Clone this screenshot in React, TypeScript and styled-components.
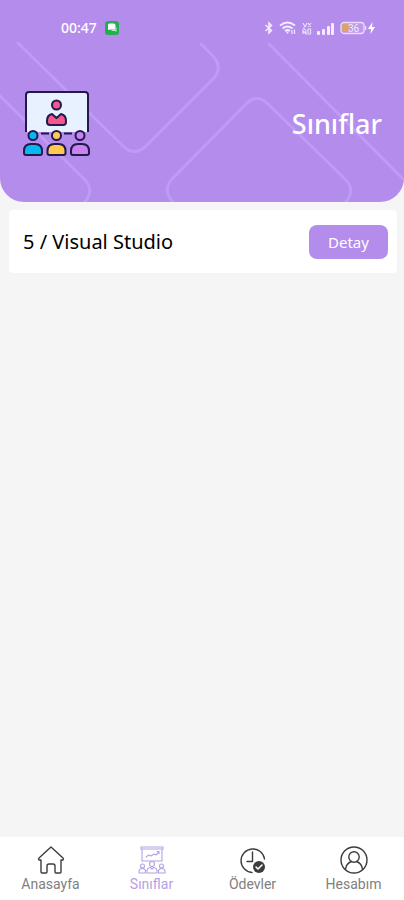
import React from "react";
import styled, { createGlobalStyle } from "styled-components";

const GlobalStyle = createGlobalStyle`
  *, *::before, *::after { box-sizing: border-box; }
  body { margin: 0; background: #f5f5f5; font-family: "Noto Sans", "Open Sans", sans-serif; }
  svg { display: block; flex-shrink: 0; }
`;

const Screen = styled.div`
  display: flex;
  flex-direction: column;
  min-height: 100vh;
  background: #f5f5f5;
`;

const Header = styled.header`
  position: relative;
  overflow: hidden;
  padding-bottom: 44px;
  border-radius: 0 0 24px 24px;
  background: #b38cec;
  color: #fff;
`;

const Pattern = styled.svg`
  position: absolute;
  inset: 0;
  width: 100%;
  height: 100%;
`;

const StatusBar = styled.div`
  position: relative;
  display: flex;
  align-items: center;
  justify-content: space-between;
  height: 56px;
  padding: 0 28px 0 61px;
`;

const StatusGroup = styled.div<{ $gap: number }>`
  display: flex;
  align-items: center;
  gap: ${({ $gap }) => $gap}px;
`;

const Clock = styled.time`
  font-size: 14px;
  line-height: 16px;
  font-weight: 500;
`;

const TitleRow = styled.div`
  position: relative;
  display: flex;
  align-items: center;
  justify-content: space-between;
  padding: 34px 22px 0 23px;
`;

const Title = styled.h1`
  margin: 0;
  font-size: 27px;
  line-height: 36px;
  font-weight: 500;
`;

const ClassList = styled.ul`
  flex: 1;
  display: flex;
  flex-direction: column;
  gap: 8px;
  margin: 0;
  padding: 8px 7px 8px 9px;
  list-style: none;
`;

const ClassCard = styled.li`
  display: flex;
  align-items: center;
  justify-content: space-between;
  height: 63px;
  padding: 0 9px 0 14px;
  border-radius: 4px;
  background: #fff;
`;

const ClassName = styled.span`
  color: #000;
  font-size: 20px;
  line-height: 28px;
`;

const DetailButton = styled.button`
  width: 79px;
  height: 34px;
  padding: 0;
  border: 0;
  border-radius: 8px;
  background: #b38cec;
  color: #fff;
  font-family: inherit;
  font-size: 15px;
  line-height: 20px;
  cursor: pointer;
`;

const TabBar = styled.nav`
  display: flex;
  height: 63px;
  background: #fff;
`;

const Tab = styled.a<{ $active?: boolean }>`
  flex: 1;
  display: flex;
  flex-direction: column;
  align-items: center;
  padding-top: 8px;
  color: ${({ $active }) => ($active ? "#b5a0e6" : "#3c3c3c")};
  text-decoration: none;
`;

const TabLabel = styled.span<{ $active?: boolean }>`
  color: ${({ $active }) => ($active ? "#b5a0e6" : "#808080")};
  font-family: Roboto, sans-serif;
  font-size: 14px;
  line-height: 18px;
`;

const HeaderPattern = () => (
  <Pattern viewBox="0 0 404 202" preserveAspectRatio="xMidYMin slice" fill="none" stroke="#c09bf5" strokeWidth="3" strokeLinecap="round" aria-hidden="true">
    <path d="M18 43L124 147Q134 156 145 147L212 80Q224 68 213 56L201 44" />
    <path d="M-2 94L83 178Q96 190 84 203" />
    <path d="M174 203Q161 190 173 178L246 104Q257 93 268 104L344 178Q357 190 345 203" />
    <path d="M269 44L406 182" />
  </Pattern>
);

const ChatBadge = () => (
  <svg width="14" height="14" viewBox="0 0 14 14" aria-hidden="true">
    <rect width="14" height="14" rx="3" fill="#25ad52" />
    <path d="M4.500 2.500h4a2 2 0 0 1 2 2v4H5.500L3 9V4a1.500 1.500 0 0 1 1.500-1.500Z" fill="#fff" />
    <path d="M6 8.500h5V6q1 1 .5 2.500V11L10 10H8q-1.500 0-2-1.500Z" fill="#b9ecc6" />
  </svg>
);

const BluetoothIcon = () => (
  <svg width="10" height="14" viewBox="0 0 10 14" fill="none" stroke="#f4ebff" strokeWidth="1.500" aria-hidden="true">
    <path d="M1.500 4l6 5.500L5 12V2l2.500 2.500L1.500 10" />
  </svg>
);

const WifiIcon = () => (
  <svg width="18" height="14" viewBox="0 0 18 14" fill="none" stroke="#f4ebff" strokeWidth="1.800" aria-hidden="true">
    <path d="M1 4.500Q8.500-1.500 16 4.500M3.500 7.500q5-4 10 0M6 10q2.500-2 5 0" />
    <path d="M7 10.500h3L8.500 13Z" fill="#f4ebff" stroke="none" />
    <path d="M13 9v4M15.500 8.500v4.500" strokeWidth="1.200" />
  </svg>
);

const VoLteIcon = () => (
  <svg width="10" height="13" viewBox="0 0 10 13" fill="none" stroke="#eadcff" strokeWidth="1.200" aria-hidden="true">
    <path d="M1 1l2 4 2-4M6 1l3 4M9 1L6 5M1 6l2.500 2M1 12V8.500l3 3.500V8M6 12V7h2.500v5Z" />
  </svg>
);

const SignalIcon = () => (
  <svg width="18" height="13" viewBox="0 0 18 13" fill="#f4ebff" aria-hidden="true">
    <rect x="0" y="9" width="3" height="4" rx="1" />
    <rect x="5" y="7" width="3" height="6" rx="1" />
    <rect x="10" y="4" width="3" height="9" rx="1" />
    <rect x="14" y="1" width="3" height="12" rx="1" />
  </svg>
);

const BatteryIcon = () => (
  <svg width="36" height="14" viewBox="0 0 36 14" aria-hidden="true">
    <rect x="1" y="1.500" width="23" height="11" rx="3" fill="#bd99e8" stroke="#eadcff" strokeWidth="1.300" />
    <path d="M4 3h5v8H4a2 2 0 0 1-2-2V5a2 2 0 0 1 2-2Z" fill="#d9a26f" />
    <text x="8" y="11" fill="#f4ebff" fontFamily="Roboto, sans-serif" fontSize="10">36</text>
    <path d="M25.500 5v4" stroke="#eadcff" strokeWidth="1.500" />
    <path d="M32.500 1L28 8h3l-.5 5L35 6h-3Z" fill="#fff" />
  </svg>
);

const people = [
  { x: 10, fill: "#08b9ef" },
  { x: 33.5, fill: "#ffc94f" },
  { x: 57, fill: "#c982ef" },
];

const ClassroomIcon = () => (
  <svg width="67" height="68" viewBox="0 0 67 68" stroke="#21194f" strokeWidth="2" strokeLinejoin="round" aria-hidden="true">
    <path d="M3 42V5q0-3 3-3h56q3 0 3 3v37Z" fill="#e7f1ff" stroke="none" />
    <path d="M3 42V5q0-3 3-3h56q3 0 3 3v37M18 43.500h8M41 43.500h8" fill="none" />
    <circle cx="33.500" cy="15" r="4.500" fill="#f5578c" />
    <path d="M24 32v-1q0-6 5-7l4.500 4 4.500-4q5 1 5 7v1q0 3-3 3H27q-3 0-3-3Z" fill="#f5578c" />
    {people.map(({ x, fill }) => (
      <g key={x} fill={fill}>
        <circle cx={x} cy="45.500" r="4.500" />
        <path d={`M${x - 9} 63v-2q0-7 7-7h4q7 0 7 7v2q0 2-2 2h-14q-2 0-2-2Z`} />
      </g>
    ))}
  </svg>
);

const tabIconProps = {
  width: 30,
  height: 30,
  viewBox: "0 0 30 30",
  fill: "none",
  stroke: "currentColor",
  strokeWidth: 1.4,
  strokeLinecap: "round" as const,
  strokeLinejoin: "round" as const,
  "aria-hidden": true,
};

const HomeIcon = () => (
  <svg {...tabIconProps}>
    <path d="M5 15H3q-1-1 0-2L15 2l12 11q1 1 0 2h-2v12q0 1-1 1h-4q-1 0-1-1v-6q0-2-2-2h-4q-2 0-2 2v6q0 1-1 1H6q-1 0-1-1Z" />
  </svg>
);

const TeachingIcon = () => (
  <svg {...tabIconProps} strokeWidth={1.1}>
    <path d="M4 2h22v2H4ZM5 4v12h20V4M9 12l3-2 2 1 3-2 2 1 3-3M20 6.500h2v2" />
    <circle cx="15" cy="19" r="2.500" />
    <circle cx="5.500" cy="21" r="2" />
    <circle cx="24.500" cy="21" r="2" />
    <path d="M10 28v-2q0-3 3.500-3.500L15 24l1.500-1.500Q20 23 20 26v2ZM2 28v-1.500q0-3 3.500-3 2 0 3 2V28ZM21.500 28v-2.500q1-2 3-2 3.500 0 3.500 3V28Z" />
  </svg>
);

const HomeworkIcon = () => (
  <svg {...tabIconProps}>
    <path d="M14 27.500A11.800 11.800 0 1 1 26.500 14" />
    <path d="M14.500 7v9.500H9" />
    <circle cx="21" cy="22" r="6" fill="currentColor" stroke="none" />
    <path d="M18 22l2 2 4-4" stroke="#fff" strokeWidth="1.600" />
  </svg>
);

const AccountIcon = () => (
  <svg {...tabIconProps}>
    <circle cx="15" cy="15" r="13" />
    <circle cx="15" cy="12" r="5.200" />
    <path d="M6.500 24.500q.5-6 6-8M23.500 24.500q-.5-6-6-8" />
  </svg>
);

const tabs = [
  { label: "Anasayfa", href: "#anasayfa", Icon: HomeIcon },
  { label: "Sınıflar", href: "#siniflar", Icon: TeachingIcon, active: true },
  { label: "Ödevler", href: "#odevler", Icon: HomeworkIcon },
  { label: "Hesabım", href: "#hesabim", Icon: AccountIcon },
];

const classes = ["5 / Visual Studio"];

export default function App() {
  return (
    <Screen lang="tr">
      <GlobalStyle />
      <Header>
        <HeaderPattern />
        <StatusBar>
          <StatusGroup $gap={8}>
            <Clock>00:47</Clock>
            <ChatBadge />
          </StatusGroup>
          <StatusGroup $gap={5}>
            <BluetoothIcon />
            <WifiIcon />
            <VoLteIcon />
            <SignalIcon />
            <BatteryIcon />
          </StatusGroup>
        </StatusBar>
        <TitleRow>
          <ClassroomIcon />
          <Title>Sınıflar</Title>
        </TitleRow>
      </Header>
      <ClassList>
        {classes.map((name) => (
          <ClassCard key={name}>
            <ClassName>{name}</ClassName>
            <DetailButton type="button">Detay</DetailButton>
          </ClassCard>
        ))}
      </ClassList>
      <TabBar>
        {tabs.map(({ label, href, Icon, active }) => (
          <Tab key={label} href={href} $active={active} aria-current={active ? "page" : undefined}>
            <Icon />
            <TabLabel $active={active}>{label}</TabLabel>
          </Tab>
        ))}
      </TabBar>
    </Screen>
  );
}
